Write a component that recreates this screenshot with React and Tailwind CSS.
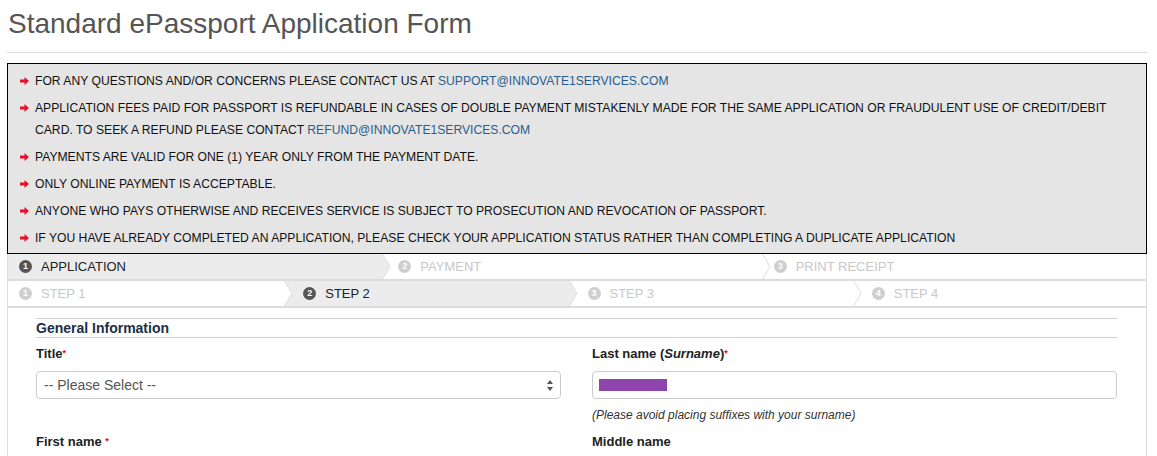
import React from 'react'

const notices = [
  { text: 'FOR ANY QUESTIONS AND/OR CONCERNS PLEASE CONTACT US AT ', link: 'SUPPORT@INNOVATE1SERVICES.COM' },
  {
    text: 'APPLICATION FEES PAID FOR PASSPORT IS REFUNDABLE IN CASES OF DOUBLE PAYMENT MISTAKENLY MADE FOR THE SAME APPLICATION OR FRAUDULENT USE OF CREDIT/DEBIT CARD. TO SEEK A REFUND PLEASE CONTACT ',
    link: 'REFUND@INNOVATE1SERVICES.COM'
  },
  { text: 'PAYMENTS ARE VALID FOR ONE (1) YEAR ONLY FROM THE PAYMENT DATE.' },
  { text: 'ONLY ONLINE PAYMENT IS ACCEPTABLE.' },
  { text: 'ANYONE WHO PAYS OTHERWISE AND RECEIVES SERVICE IS SUBJECT TO PROSECUTION AND REVOCATION OF PASSPORT.' },
  { text: 'IF YOU HAVE ALREADY COMPLETED AN APPLICATION, PLEASE CHECK YOUR APPLICATION STATUS RATHER THAN COMPLETING A DUPLICATE APPLICATION' }
]

function Arrow() {
  return (
    <svg width="9" height="8" viewBox="0 0 9 8" className="shrink-0 mt-[7px]">
      <path d="M0 2.5h4.5V0L9 4 4.5 8V5.5H0z" fill="#e8112d" />
    </svg>
  )
}

function Num({ n, active }) {
  return (
    <span
      className={`w-[13px] h-[13px] rounded-full flex items-center justify-center text-[9px] font-bold text-white leading-none ${active ? 'bg-[#555]' : 'bg-[#cfcfcf]'}`}
    >
      {n}
    </span>
  )
}

function Step({ n, label, active, nextActive, last, pad = 'pl-[11px]' }) {
  const bg = active ? '#ececec' : '#ffffff'
  const next = nextActive ? '#ececec' : '#ffffff'
  return (
    <div className={`relative flex-1 flex items-center gap-[9px] ${pad} ${active ? 'bg-[#ececec]' : 'bg-white'}`}>
      <Num n={n} active={active} />
      <span className={`text-[13px] ${active ? 'text-[#222]' : 'text-[#c8c8c8]'}`}>{label}</span>
      {!last && (
        <svg width="9" height="25" viewBox="0 0 9 25" className="absolute right-0 top-0 z-10">
          <rect width="9" height="25" fill={bg} />
          <path d="M0 0L9 0L9 25L0 25L8 12.5Z" fill={next} />
          <path d="M0.5 0L8 12.5L0.5 25" fill="none" stroke="#dcdcdc" strokeWidth="1" />
        </svg>
      )}
    </div>
  )
}

function Label({ children, req }) {
  return (
    <div className="text-[13px] font-bold text-[#222] leading-[18px]">
      {children}
      {req && <span className="text-[#e00] text-[9px] align-top relative top-[-1px]">*</span>}
    </div>
  )
}

export default function App() {
  return (
    <div className="w-[1157px] h-[456px] overflow-hidden bg-white pl-[7px] pr-[10px] pt-[8px]" style={{ fontFamily: '"Liberation Sans", Arial, sans-serif' }}>
      <h1 className="pl-[1px] text-[28px] leading-[31px] text-[#555]">Standard ePassport Application Form</h1>
      <div className="mt-[13px] h-px bg-[#ddd]" />

      <div className="mt-[10px] border border-black bg-[#e5e5e5] pl-[12px] pr-[15px] pt-[6px] pb-[4px]">
        {notices.map((item, i) => (
          <div key={i} className={`flex gap-[6px] text-[12.15px] leading-[22px] text-[#111] ${i < notices.length - 1 ? 'mb-[5px]' : ''}`}>
            <Arrow />
            <p>
              {item.text}
              {item.link && <span className="text-[#285e8e]">{item.link}</span>}
            </p>
          </div>
        ))}
      </div>

      <div className="flex h-[27px] border-x border-b-2 border-[#dcdcdc]">
        <Step n="1" label="APPLICATION" active nextActive={false} />
        <Step n="2" label="PAYMENT" pad="pl-[7px]" />
        <Step n="3" label="PRINT RECEIPT" pad="pl-[3px]" last />
      </div>
      <div className="flex h-[27px] border-x border-b-2 border-[#dcdcdc]">
        <Step n="1" label="STEP 1" nextActive />
        <Step n="2" label="STEP 2" active pad="pl-[10px]" />
        <Step n="3" label="STEP 3" pad="pl-[10px]" />
        <Step n="4" label="STEP 4" pad="pl-[10px]" last />
      </div>

      <div className="border-x border-[#dcdcdc] pl-[28px] pr-[29px] pt-[10px] h-[200px]">
        <h3 className="border-y border-[#cfcfcf] text-[14px] font-bold leading-[18px] text-[#1c2f45]">General Information</h3>
        <div className="grid grid-cols-2 gap-x-[31px]">
          <div>
            <div className="mt-[7px]"><Label req>Title</Label></div>
            <div className="mt-[8px] h-[28px] border border-[#ccc] rounded-[4px] flex items-center justify-between pl-[7px] pr-[7px]">
              <span className="text-[14px] text-[#555]">-- Please Select --</span>
              <svg width="6" height="11" viewBox="0 0 6 11">
                <path d="M3 0L6 4H0z M3 11L0 7H6z" fill="#555" />
              </svg>
            </div>
          </div>
          <div>
            <div className="mt-[7px]">
              <Label req>
                Last name (<i>Surname</i>)
              </Label>
            </div>
            <div className="mt-[8px] h-[28px] border border-[#ccc] rounded-[4px] flex items-center pl-[6px]">
              <div className="w-[68px] h-[12px] bg-[#8e44ad]" />
            </div>
            <p className="mt-[8px] text-[12px] italic leading-[16px] text-[#333]">(Please avoid placing suffixes with your surname)</p>
          </div>
          <div className="mt-[10px]">
            <Label req>First name </Label>
          </div>
          <div className="mt-[10px]">
            <Label>Middle name</Label>
          </div>
        </div>
      </div>
    </div>
  )
}
